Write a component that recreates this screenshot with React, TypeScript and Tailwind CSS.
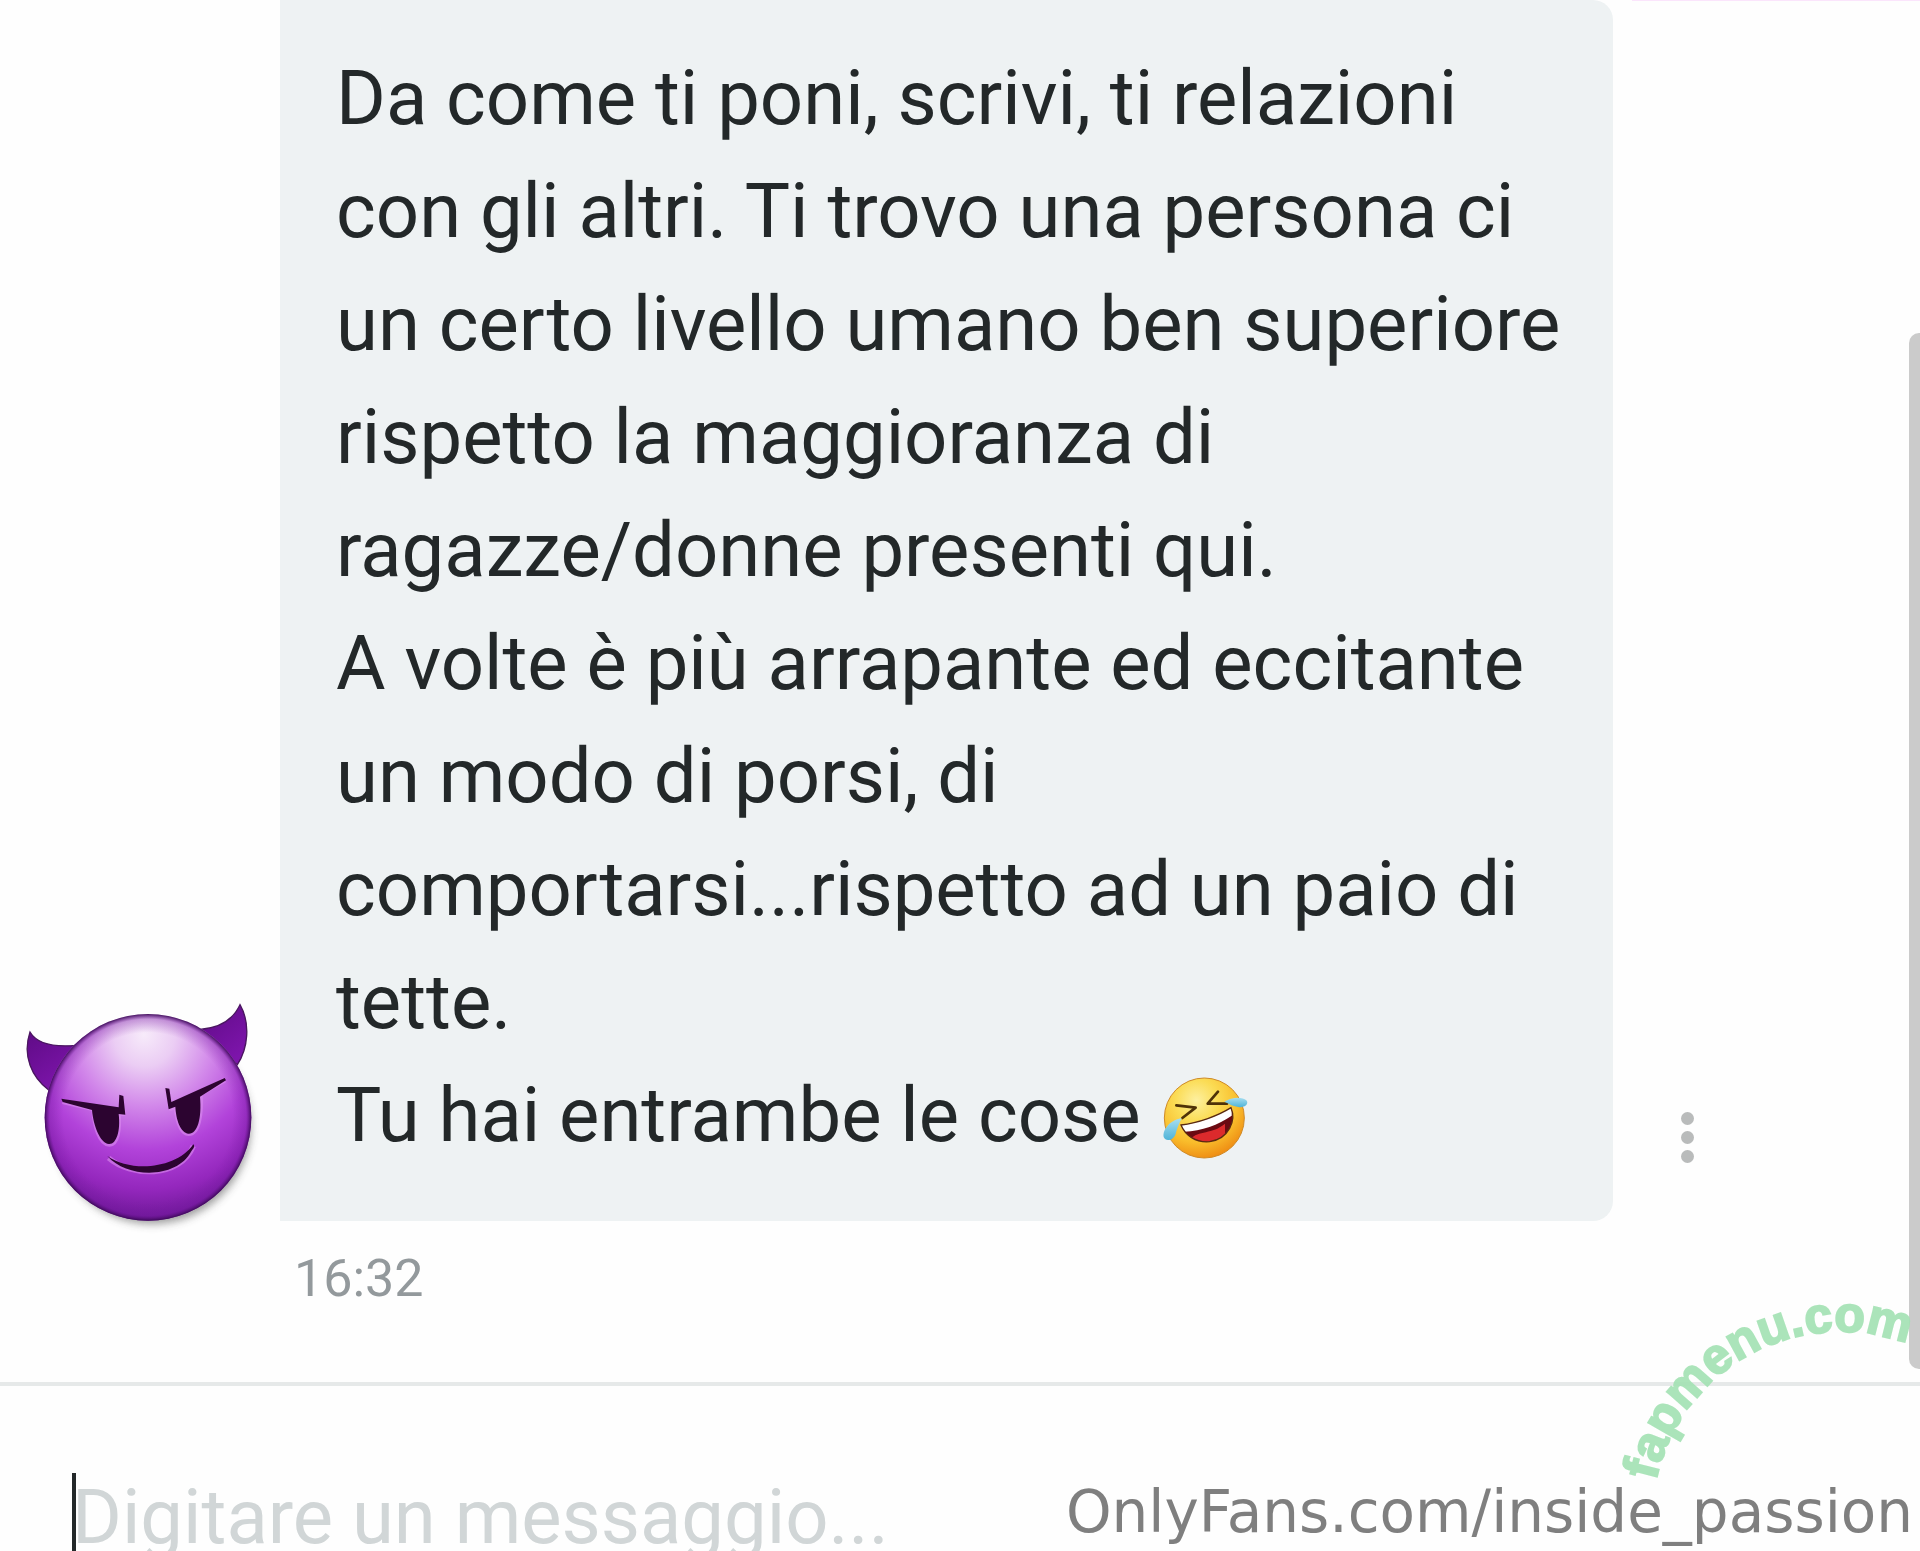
const MESSAGE_LINES = [
  'Da come ti poni, scrivi, ti relazioni',
  'con gli altri. Ti trovo una persona ci',
  'un certo livello umano ben superiore',
  'rispetto la maggioranza di',
  'ragazze/donne presenti qui.',
  'A volte è più arrapante ed eccitante',
  'un modo di porsi, di',
  'comportarsi...rispetto ad un paio di',
  'tette.',
];

function DevilAvatar() {
  return (
    <svg viewBox="0 0 840 718" className="w-full overflow-visible" role="img" aria-label="Avatar">
      <defs>
        <radialGradient id="devil-face" cx="0.5" cy="0.14" r="0.92" fx="0.48" fy="0.1">
          <stop offset="0" stopColor="#f7ebfa" />
          <stop offset="0.16" stopColor="#ebcdf4" />
          <stop offset="0.36" stopColor="#d288ea" />
          <stop offset="0.58" stopColor="#b243da" />
          <stop offset="0.78" stopColor="#9427bd" />
          <stop offset="1" stopColor="#5c1185" />
        </radialGradient>
        <radialGradient id="devil-edge" cx="0.5" cy="0.5" r="0.5">
          <stop offset="0.82" stopColor="#7a1ba6" stopOpacity="0" />
          <stop offset="0.95" stopColor="#7417a0" stopOpacity="0.35" />
          <stop offset="1" stopColor="#3a0855" stopOpacity="0.95" />
        </radialGradient>
        <linearGradient id="devil-horn" x1="0" y1="0" x2="0.6" y2="1">
          <stop offset="0" stopColor="#5f0b86" />
          <stop offset="1" stopColor="#7d15ab" />
        </linearGradient>
        <filter id="devil-blur" x="-20%" y="-60%" width="140%" height="220%">
          <feGaussianBlur stdDeviation="12" />
        </filter>
      </defs>
      <circle cx="456" cy="430" r="296" fill="#3b3b3b" opacity="0.5" filter="url(#devil-blur)" />
      <path
        d="M90 150C110 184 160 196 228 190L146 324C96 286 66 222 90 150Z"
        fill="url(#devil-horn)"
        stroke="#4a1660"
        strokeWidth="4"
      />
      <path
        d="M720 68C698 116 656 138 600 142L712 248C744 200 752 124 720 68Z"
        fill="url(#devil-horn)"
        stroke="#4a1660"
        strokeWidth="4"
      />
      <circle cx="444" cy="406" r="310" fill="url(#devil-face)" />
      <circle cx="444" cy="406" r="310" fill="url(#devil-edge)" />
      <g fill="none" stroke="#dc8df0" strokeWidth="16" strokeLinejoin="round" opacity="0.6">
        <path d="M188 358L282 380C284 430 300 486 328 486C352 486 358 440 354 392L370 394L362 342" />
        <path d="M674 294L600 334C604 400 594 454 566 454C542 454 532 410 528 372L512 378L502 322" />
        <path d="M326 528C390 584 540 592 580 492" />
      </g>
      <g fill="#2c0430">
        <path d="M184 350L356 376L358 338L370 342L376 398L356 396C362 446 350 487 327 486C300 484 280 430 276 384L188 360Z" />
        <path d="M674 288L678 295L600 344C606 410 592 456 566 455C540 452 528 410 526 374L506 382L496 318L508 320L514 360Z" />
        <path d="M322 522C392 572 528 562 580 487C586 494 580 500 574 508C532 590 384 592 322 522Z" />
      </g>
    </svg>
  );
}

function LaughingFace() {
  return (
    <svg
      viewBox="102 54 276 264"
      className="inline-block h-[88px] w-[92px] align-[-20px]"
      role="img"
      aria-label="🤣"
    >
      <defs>
        <radialGradient id="laugh-face" cx="0.4" cy="0.28" r="0.75">
          <stop offset="0" stopColor="#fdf0a0" />
          <stop offset="0.35" stopColor="#fbdc55" />
          <stop offset="0.7" stopColor="#f9bd2b" />
          <stop offset="1" stopColor="#ee8a12" />
        </radialGradient>
        <linearGradient id="laugh-tear" x1="0" y1="0" x2="0" y2="1">
          <stop offset="0" stopColor="#a8def0" />
          <stop offset="1" stopColor="#4fb4d8" />
        </linearGradient>
        <clipPath id="laugh-mouth">
          <path d="M168 220C220 214 280 192 318 168C334 206 312 262 254 270C212 274 180 250 168 220Z" />
        </clipPath>
      </defs>
      <g transform="translate(0 -10)">
        <circle cx="238" cy="199" r="120" fill="url(#laugh-face)" stroke="#cf8a26" strokeWidth="3" />
        <g clipPath="url(#laugh-mouth)">
          <path d="M160 160H340V280H160Z" fill="#6a0a12" />
          <path d="M196 262C220 236 262 248 300 216L300 280H190Z" fill="#dc2a2c" />
          <path d="M164 214C220 208 280 188 322 162L320 192C280 220 230 238 178 240Z" fill="#fff" />
        </g>
        <path
          d="M168 220C220 214 280 192 318 168C334 206 312 262 254 270C212 274 180 250 168 220Z"
          fill="none"
          stroke="#5a2a10"
          strokeWidth="4"
        />
        <g fill="none" stroke="#4f3208" strokeWidth="8" strokeLinecap="round" strokeLinejoin="round">
          <path d="M154 161L212 168L172 199" />
          <path d="M279 120L248 156L306 156" />
        </g>
        <path d="M170 200C142 202 112 230 116 256C122 272 146 266 152 246C156 230 162 216 170 200Z" fill="url(#laugh-tear)" />
        <path d="M298 150C320 136 352 134 364 146C374 158 356 170 340 166C326 164 314 158 298 150Z" fill="url(#laugh-tear)" />
      </g>
    </svg>
  );
}

function ArcBadge() {
  return (
    <svg
      viewBox="0 0 300 220"
      className="pointer-events-none absolute right-0 bottom-[57px] h-[220px] w-[300px] overflow-visible"
    >
      <path id="badge-arc" d="M36 207A188 188 0 0 1 408 246" fill="none" />
      <text
        className="fill-[#a3e2b3] stroke-[#a3e2b3] stroke-2 font-['Liberation_Sans',sans-serif] text-[50px] font-bold"
        opacity="0.9"
      >
        <textPath href="#badge-arc">fapmenu.com</textPath>
      </text>
    </svg>
  );
}

export default function App() {
  return (
    <div className="relative flex h-screen flex-col overflow-hidden bg-[#fefefe] font-['Roboto',sans-serif]">
      <div className="absolute top-0 right-0 h-px w-72 bg-[#fbe5fc]" />

      <main className="shrink-0">
        <div className="flex items-end">
          <div className="w-[280px] shrink-0">
            <DevilAvatar />
          </div>

          <div className="min-w-0 flex-1 rounded-r-[20px] bg-[#eef2f3] px-14 pt-[42px] pb-[49px]">
            <p className="text-[76px] leading-[113px] whitespace-nowrap text-[#232829]">
              {MESSAGE_LINES.map((line) => (
                <span key={line} className="block">
                  {line}
                </span>
              ))}
              <span className="block">
                Tu hai entrambe le cose <LaughingFace />
              </span>
            </p>
          </div>

          <div className="flex w-[307px] shrink-0 pb-[58px] pl-[62px]">
            <button
              type="button"
              aria-label="Altro"
              className="flex flex-col items-center gap-1.5 px-1.5 text-[#b9bbbb]"
            >
              <span className="size-[13px] rounded-full bg-current" />
              <span className="size-[13px] rounded-full bg-current" />
              <span className="size-[13px] rounded-full bg-current" />
            </button>
          </div>
        </div>

        <time className="block pt-[18px] pb-[63px] pl-[294px] text-[52px] leading-20 text-[#93999c]">16:32</time>
      </main>

      <footer className="flex-1 overflow-hidden border-t-4 border-[#e6e9e9] pt-[75px] pl-[72px]">
        <div className="relative">
          <span className="absolute top-3 left-0 h-[113px] w-1 bg-[#232829]" />
          <input
            type="text"
            aria-label="Digitare un messaggio"
            placeholder="Digitare un messaggio..."
            className="h-[113px] w-1/2 bg-transparent text-[76px] leading-[113px] text-[#232829] outline-none placeholder:text-[#d1d6d7]"
          />
        </div>
      </footer>

      {/* Scrollbar thumb */}
      <div className="absolute top-[333px] right-0 h-[1036px] w-[11px] rounded-l-[10px] bg-[#cbcbcb]" />

      <ArcBadge />
      <a
        href="#profile"
        className="absolute right-[7px] bottom-1 font-['DejaVu_Sans',sans-serif] text-[58px] leading-[70px] text-[#7f7f7f]"
      >
        OnlyFans.com/inside_passion
      </a>
    </div>
  );
}
